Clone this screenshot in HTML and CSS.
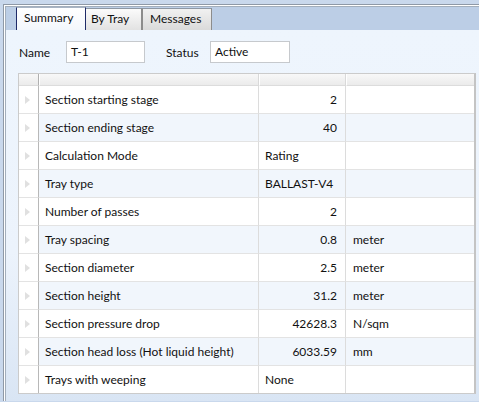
FILE: index.html
```html
<!DOCTYPE html>
<html lang="en">
<head>
  <meta charset="UTF-8" />
  <meta name="viewport" content="width=device-width, initial-scale=1.0" />
  <title>Tray Section Summary</title>
  <link rel="stylesheet" href="styles.css">
</head>
<body>

<div class="frame">
  <div class="frame-inner">
    <div class="window">

      <div class="tabs">
        <div class="tab active">Summary</div>
        <div class="tab tray">By Tray</div>
        <div class="tab msgs">Messages</div>
      </div>

      <div class="panel">
        <div class="fields">
          <span class="label name-label">Name</span>
          <div class="input name-input">T-1</div>
          <span class="label status-label">Status</span>
          <div class="input status-input">Active</div>
        </div>

        <div class="grid">
          <div class="hd first"></div><div class="hd"></div><div class="hd"></div><div class="hd last"></div>

          <div class="rh"><i></i></div><div class="c">Section starting stage</div><div class="c num">2</div><div class="c last"></div>
          <div class="rh"><i></i></div><div class="c alt">Section ending stage</div><div class="c alt num">40</div><div class="c alt last"></div>
          <div class="rh"><i></i></div><div class="c">Calculation Mode</div><div class="c">Rating</div><div class="c last"></div>
          <div class="rh"><i></i></div><div class="c alt">Tray type</div><div class="c alt">BALLAST-V4</div><div class="c alt last"></div>
          <div class="rh"><i></i></div><div class="c">Number of passes</div><div class="c num">2</div><div class="c last"></div>
          <div class="rh"><i></i></div><div class="c alt">Tray spacing</div><div class="c alt num">0.8</div><div class="c alt last">meter</div>
          <div class="rh"><i></i></div><div class="c">Section diameter</div><div class="c num">2.5</div><div class="c last">meter</div>
          <div class="rh"><i></i></div><div class="c alt">Section height</div><div class="c alt num">31.2</div><div class="c alt last">meter</div>
          <div class="rh"><i></i></div><div class="c">Section pressure drop</div><div class="c num">42628.3</div><div class="c last">N/sqm</div>
          <div class="rh"><i></i></div><div class="c alt">Section head loss (Hot liquid height)</div><div class="c alt num">6033.59</div><div class="c alt last">mm</div>
          <div class="rh end"><i></i></div><div class="c end">Trays with weeping</div><div class="c end">None</div><div class="c end last"></div>
        </div>
      </div>

    </div>
  </div>
</div>

</body>
</html>
```

FILE: styles.css
```css
* {
  box-sizing: border-box;
}
html, body {
  height: 100%;
}
body {
  margin: 0;
  background-color: #c9d8ec;
  font-family: Lato, 'Noto Sans', sans-serif;
  font-size: 12px;
  color: #111;
  overflow: hidden;
}
.frame {
  margin: 4px 0 0 3px;
  border-top: 1px solid #8f99a6;
  border-left: 1px solid #8f99a6;
}
.frame-inner {
  border-top: 1px solid #ffffff;
  border-left: 1px solid #ffffff;
}
.window {
  height: 395px;
  border-top: 1px solid #a3aebb;
  border-left: 1px solid #a3aebb;
  display: flex;
  flex-direction: column;
}
.tabs {
  height: 23px;
  background-color: #bccee6;
  display: flex;
  align-items: flex-end;
  padding-left: 10px;
}
.tab {
  height: 22px;
  line-height: 20px;
  border-top: 1px solid #8e98a4;
  border-right: 1px solid #8c8c8c;
  background: linear-gradient(#fbfbfb, #e2e2e2);
}
.tab.active {
  width: 70px;
  padding-left: 7px;
  border-left: 1px solid #1f2b68;
  border-right: 1px solid #1f2b68;
  border-top-color: #a8b4c4;
  background: linear-gradient(#ffffff, #f3f7fc);
  height: 23px;
}
.tab.tray {
  width: 56px;
  padding-left: 5px;
}
.tab.msgs {
  width: 70px;
  padding-left: 7px;
  border-left: 1px solid #8c8c8c;
  background: linear-gradient(#f1f1f1, #dadada);
}
.panel {
  flex: 1;
  background: linear-gradient(#eef5fd 0%, #ecf3fc 60%, #d9e5f4 100%);
  padding: 11px 0 0 12px;
}
.fields {
  display: flex;
  align-items: center;
  height: 22px;
  padding-left: 1px;
}
.label {
  display: block;
}
.name-label {
  width: 47px;
}
.status-label {
  width: 44px;
  margin-left: 21px;
}
.input {
  height: 22px;
  line-height: 20px;
  padding-left: 4px;
  background-color: #ffffff;
  border: 1px solid #c6c9cd;
}
.name-input {
  width: 79px;
}
.status-input {
  width: 80px;
}
.grid {
  margin-top: 10px;
  width: 458px;
  display: grid;
  grid-template-columns: 20px 220px 87px 128px;
  border: 1px solid #cbcbcb;
  border-right: 2px solid #c4c4c4;
  background-color: #ffffff;
}
.hd {
  height: 12px;
  background: linear-gradient(#f8f8f8, #ebebeb);
  border-right: 1px solid #d9d9d9;
  border-left: 1px solid #ffffff;
  border-bottom: 1px solid #dcdcdc;
}
.hd.first {
  border-left: none;
  border-right: 1px solid #b0b0b0;
}
.hd.last {
  border-right: none;
}
.rh {
  height: 28px;
  background-color: #ffffff;
  border-right: 1px solid #b8b8b8;
  border-bottom: 1px solid #e3e3e3;
  display: flex;
  align-items: center;
  padding-left: 6px;
}
.rh i {
  display: block;
  width: 0;
  height: 0;
  border-left: 5px solid #e0e0e0;
  border-top: 4px solid transparent;
  border-bottom: 4px solid transparent;
}
.c {
  height: 28px;
  line-height: 27px;
  padding: 0 8px 0 6px;
  border-right: 1px solid #dcdcdc;
  border-bottom: 1px solid #e3e3e3;
  white-space: nowrap;
}
.c.alt {
  background-color: #f1f6fc;
}
.c.num {
  text-align: right;
}
.c.last {
  border-right: none;
  padding-left: 7px;
}
.grid .c:nth-child(4n+3) {
  padding-left: 6px;
}
.grid .end {
  border-bottom: none;
  height: 27px;
}
```
